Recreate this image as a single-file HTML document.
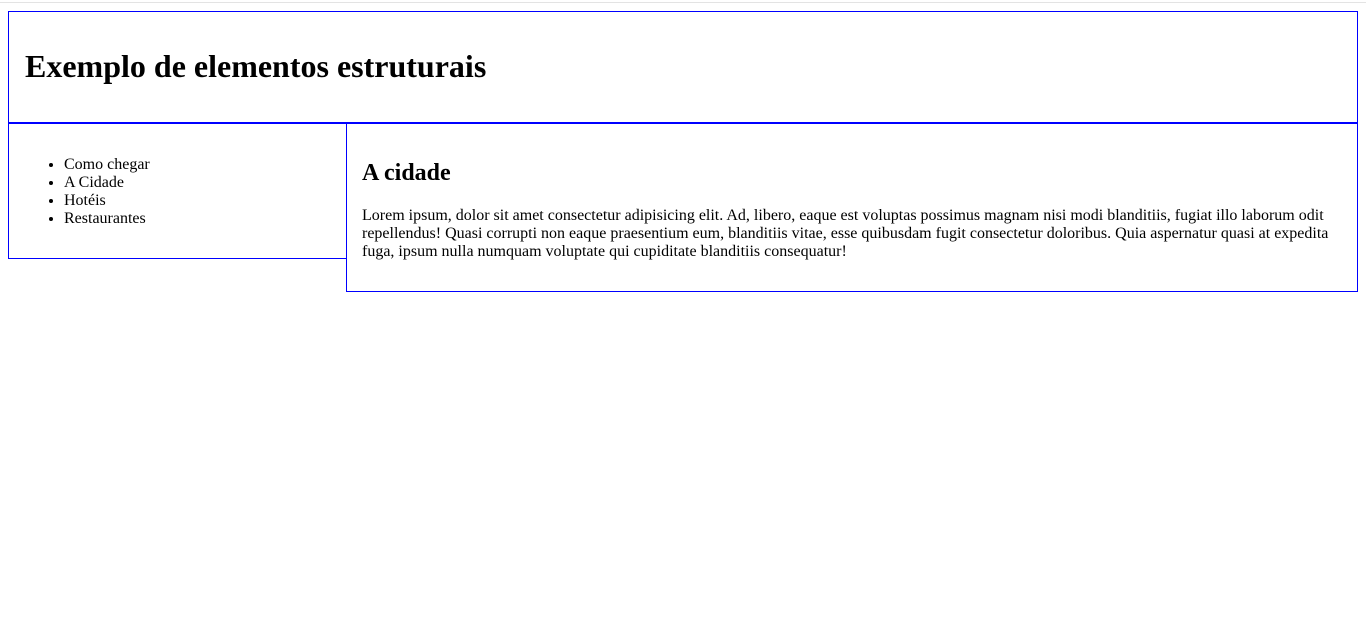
<!DOCTYPE html>
<html><head><meta charset="utf-8"><style>
html,body{margin:0;padding:0;background:#fff;}
body{font-family:"Liberation Serif",serif;font-size:16px;color:#000;position:relative;width:1366px;height:641px;overflow:hidden;}
.topline{position:absolute;left:0;top:2px;width:1366px;height:1px;background:#e3e3e3;}
header{position:absolute;left:8px;top:11px;width:1350px;height:112px;box-sizing:border-box;border:1px solid blue;padding:0 16px;}
header h1{margin:0;font-size:32px;line-height:37px;position:absolute;top:36px;left:16px;}
nav{position:absolute;left:8px;top:122px;width:339px;height:137px;box-sizing:border-box;border:1px solid blue;border-top:2px solid blue;}
nav ul{margin:0;padding:0 0 0 40px;position:absolute;top:32px;left:15px;line-height:18px;}
section{position:absolute;left:346px;top:122px;width:1012px;height:170px;box-sizing:border-box;border:1px solid blue;border-top:2px solid blue;padding:0 15px;}
section h2{margin:0;font-size:24px;line-height:28px;position:absolute;top:35px;left:15px;}
section p{margin:0;position:absolute;top:83px;left:15px;right:15px;line-height:18px;}
</style></head><body>
<div class="topline"></div>
<header><h1>Exemplo de elementos estruturais</h1></header>
<nav><ul><li>Como chegar</li><li>A Cidade</li><li>Hotéis</li><li>Restaurantes</li></ul></nav>
<section><h2>A cidade</h2><p>Lorem ipsum, dolor sit amet consectetur adipisicing elit. Ad, libero, eaque est voluptas possimus magnam nisi modi blanditiis, fugiat illo laborum odit repellendus! Quasi corrupti non eaque praesentium eum, blanditiis vitae, esse quibusdam fugit consectetur doloribus. Quia aspernatur quasi at expedita fuga, ipsum nulla numquam voluptate qui cupiditate blanditiis consequatur!</p></section>
</body></html>
